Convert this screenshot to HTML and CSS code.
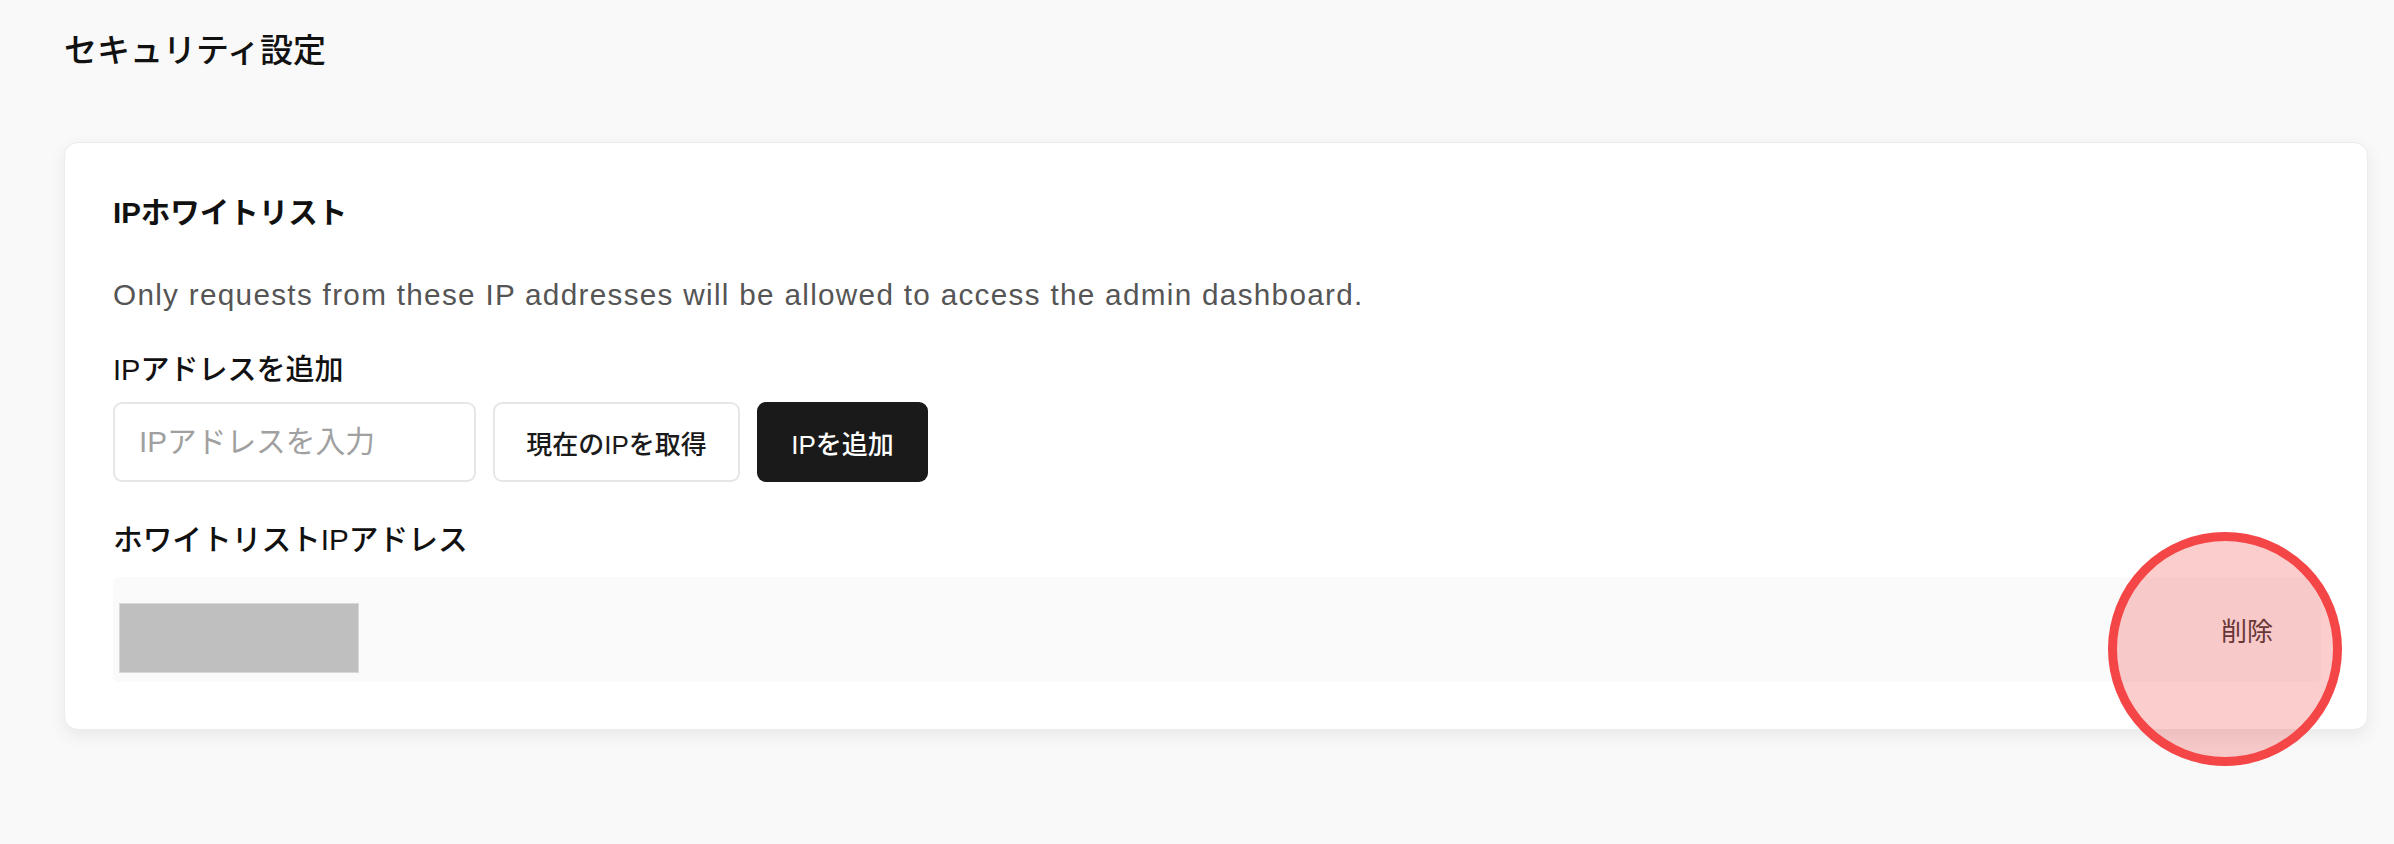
FILE: index.html
```html
<!DOCTYPE html>
<html lang="ja">
<head>
<meta charset="utf-8">
<title>セキュリティ設定</title>
<link rel="stylesheet" href="styles.css">
</head>
<body>
<main class="page">
  <h1 class="page-title">セキュリティ設定</h1>
  <section class="card">
    <h2 class="card-title">IPホワイトリスト</h2>
    <p class="card-desc">Only requests from these IP addresses will be allowed to access the admin dashboard.</p>
    <label class="field-label" for="ip">IPアドレスを追加</label>
    <div class="add-row">
      <input id="ip" class="ip-input" type="text" placeholder="IPアドレスを入力">
      <button class="btn btn-outline" type="button">現在のIPを取得</button>
      <button class="btn btn-dark" type="button">IPを追加</button>
    </div>
    <h3 class="list-title">ホワイトリストIPアドレス</h3>
    <ul class="ip-list">
      <li class="ip-item">
        <span class="ip-redacted"></span>
        <button class="btn-delete" type="button">削除</button>
        <span class="highlight-ring"></span>
      </li>
    </ul>
  </section>
</main>
</body>
</html>
```

FILE: styles.css
```css
* { box-sizing: border-box; }

html, body {
  margin: 0;
  padding: 0;
  background: #f9f9f9;
}

body {
  font-family: "Liberation Sans", "Noto Sans CJK JP", sans-serif;
  color: #111;
  height: 844px;
  overflow: hidden;
}

.page {
  padding: 26px 26px 0 64px;
}

.page-title {
  margin: 0;
  font-size: 33px;
  line-height: 50px;
  font-weight: 500;
  color: #111;
}

.card {
  margin-top: 66px;
  background: #fff;
  border: 1px solid #ececec;
  border-radius: 14px;
  box-shadow: 0 6px 18px rgba(0, 0, 0, 0.07);
  padding: 48px 46px 47px 48px;
}

.card-title {
  margin: 0;
  font-size: 29.5px;
  line-height: 44px;
  font-weight: 700;
  color: #111;
}

.card-desc {
  margin: 38px 0 0;
  font-size: 29.7px;
  line-height: 44px;
  letter-spacing: 1.3px;
  color: #555;
}

.field-label {
  display: block;
  margin-top: 31px;
  font-size: 29px;
  line-height: 44px;
  font-weight: 500;
  color: #111;
}

.add-row {
  display: flex;
  gap: 17px;
  margin-top: 10px;
  height: 80px;
}

.ip-input {
  width: 363px;
  height: 80px;
  border: 2px solid #e6e6e6;
  border-radius: 9px;
  padding: 0 24px;
  font-family: "Liberation Sans", "Noto Sans CJK JP", sans-serif;
  font-size: 29.7px;
  color: #111;
  background: #fff;
  outline: none;
}

.ip-input::placeholder {
  color: #a0a0a0;
}

.btn {
  height: 80px;
  border-radius: 9px;
  font-family: "Liberation Sans", "Noto Sans CJK JP", sans-serif;
  font-size: 26px;
  font-weight: 500;
  cursor: pointer;
}

.btn-outline {
  width: 247px;
  background: #fff;
  color: #1a1a1a;
  border: 2px solid #e6e6e6;
}

.btn-dark {
  width: 171px;
  background: #1a1a1a;
  color: #fff;
  border: 0;
}

.list-title {
  margin: 36px 0 0;
  font-size: 29.7px;
  line-height: 44px;
  font-weight: 500;
  color: #111;
}

.ip-list {
  list-style: none;
  margin: 15px 0 0;
  padding: 0;
}

.ip-item {
  position: relative;
  display: flex;
  align-items: center;
  justify-content: space-between;
  height: 105px;
  padding: 0 26px 0 6px;
  background: #fafafa;
  border-radius: 6px;
}

.ip-redacted {
  display: block;
  width: 240px;
  height: 70px;
  margin-top: 17px;
  background: #bfbfbf;
  border: 1px solid #d8d8d8;
}

.btn-delete {
  height: 52px;
  padding: 0 22px;
  border: 0;
  background: transparent;
  font-family: "Liberation Sans", "Noto Sans CJK JP", sans-serif;
  font-size: 26px;
  color: #333;
  cursor: pointer;
}

.highlight-ring {
  position: absolute;
  right: -21px;
  top: -45px;
  width: 234px;
  height: 234px;
  border-radius: 50%;
  border: 9px solid #f44646;
  background: rgba(245, 70, 70, 0.27);
  pointer-events: none;
}
```
